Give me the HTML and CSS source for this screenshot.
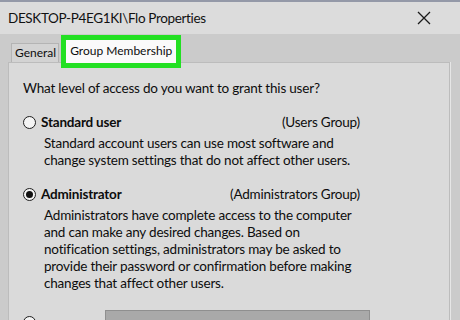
FILE: index.html
```html
<!DOCTYPE html>
<html>
<head>
<meta charset="utf-8">
<link rel="stylesheet" href="styles.css">
</head>
<body>
<div class="window">
  <div class="topline"></div>
  <div class="titlebar">
    <span class="title">DESKTOP-P4EG1KI\Flo Properties</span>
    <svg class="close" width="14" height="14" viewBox="0 0 14 14"><path d="M1 1 L13 13 M13 1 L1 13" stroke="#1a1a1a" stroke-width="1.3" fill="none"/></svg>
  </div>
  <div class="tabs">
    <div class="tab">General</div>
    <div class="tab active">Group Membership</div>
  </div>
  <div class="panel">
    <p class="question">What level of access do you want to grant this user?</p>
    <div class="option">
      <div class="row">
        <span class="radio"></span>
        <span class="label">Standard user</span>
        <span class="group">(Users Group)</span>
      </div>
      <p class="desc">Standard account users can use most software and<br>change system settings that do not affect other users.</p>
    </div>
    <div class="option">
      <div class="row">
        <span class="radio checked"></span>
        <span class="label">Administrator</span>
        <span class="group">(Administrators Group)</span>
      </div>
      <p class="desc">Administrators have complete access to the computer<br>and can make any desired changes. Based on<br>notification settings, administrators may be asked to<br>provide their password or confirmation before making<br>changes that affect other users.</p>
    </div>
    <div class="option other">
      <div class="row">
        <span class="radio"></span>
        <span class="spacer"></span>
        <span class="select"></span>
      </div>
    </div>
  </div>
</div>
</body>
</html>
```
FILE: styles.css
```css
html, body {
  margin: 0;
  padding: 0;
}
body {
  width: 460px;
  height: 320px;
  overflow: hidden;
  background: #cbcbcb;
  font-family: "Lato", "Noto Sans", sans-serif;
  color: #0d0d0d;
}
.window {
  display: flex;
  flex-direction: column;
  height: 320px;
}
.topline {
  flex-shrink: 0;
  height: 2px;
  background: #9499a8;
}
.titlebar {
  flex-shrink: 0;
  height: 32px;
  background: #dcdcdc;
  display: flex;
  align-items: center;
  justify-content: space-between;
  padding: 0 29px 0 8px;
}
.title {
  font-size: 13.5px;
  letter-spacing: -0.35px;
  color: #111;
}
.close {
  display: block;
}
.tabs {
  flex-shrink: 0;
  height: 28px;
  display: flex;
  align-items: flex-end;
  padding-left: 11px;
  background: #cbcbcb;
  position: relative;
  z-index: 2;
}
.tab {
  font-size: 12px;
  height: 19px;
  line-height: 18px;
  padding: 0 2px 0 3px;
  border: 1px solid #b4b4b4;
  border-bottom: none;
  background: #d3d3d3;
  box-sizing: border-box;
}
.tab.active {
  background: #fafafa;
  height: 23px;
  line-height: 22px;
  padding: 0 4px 0 4px;
  margin-left: 7px;
  border: none;
  outline: 5px solid #23e023;
  margin-bottom: -1px;
}
.panel {
  flex: 1;
  min-height: 0;
  overflow: hidden;
  margin: 0 10px 0 8px;
  background: #dadada;
  border: 1px solid #bcbcbc;
  border-bottom: none;
  padding: 16px 14px 0 14px;
  font-size: 13.5px;
  letter-spacing: -0.2px;
  box-shadow: 1px 0 0 #e6e6e6;
}
.question {
  margin: 0 0 14px 0;
  line-height: 19px;
}
.option {
  width: 337px;
  margin-bottom: 15px;
}
.row {
  display: flex;
  align-items: center;
  height: 20px;
}
.radio {
  flex-shrink: 0;
  width: 13px;
  height: 13px;
  border: 1.5px solid #1e1e1e;
  border-radius: 50%;
  box-sizing: border-box;
  background: #f4f4f4;
  margin-right: 5px;
  display: flex;
  align-items: center;
  justify-content: center;
}
.radio.checked::after {
  content: "";
  width: 7px;
  height: 7px;
  border-radius: 50%;
  background: #111;
}
.label {
  font-weight: bold;
  flex: 1;
}
.group {
  white-space: nowrap;
}
.desc {
  margin: 3px 0 0 21px;
  line-height: 17px;
  white-space: nowrap;
}
.option.other {
  margin-top: 18px;
}
.other .row {
  align-items: flex-start;
  height: 30px;
}
.other .radio {
  margin-top: 6px;
}
.spacer {
  width: 64px;
  flex-shrink: 0;
}
.select {
  flex-shrink: 0;
  width: 265px;
  height: 22px;
  background: #a9a9a9;
  border: 1px solid #8f8f8f;
  box-sizing: border-box;
}
```
